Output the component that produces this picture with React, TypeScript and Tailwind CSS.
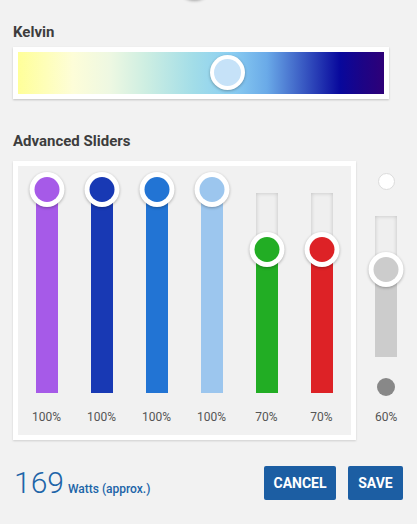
import React from "react";

const bars = [
  { c: "#a65ae8", p: 100 },
  { c: "#1839b4", p: 100 },
  { c: "#2274d4", p: 100 },
  { c: "#9cc6ee", p: 100 },
  { c: "#22ad24", p: 70 },
  { c: "#dd2226", p: 70 },
];

function Knob({ color, top }: { color: string; top: number }) {
  return (
    <div
      className="absolute left-1/2 -translate-x-1/2 w-[35px] h-[35px] rounded-full bg-white p-[5px] shadow-[0_1px_3px_rgba(0,0,0,0.3)]"
      style={{ top }}
    >
      <div className="w-full h-full rounded-full" style={{ backgroundColor: color }} />
    </div>
  );
}

export default function App() {
  return (
    <div
      className="relative w-[417px] h-[524px] overflow-hidden bg-[#f2f2f2] px-[13px] pt-[23px]"
      style={{ fontFamily: "Roboto, 'Liberation Sans', sans-serif" }}
    >
      <div className="absolute left-[177px] top-[-35px] w-[35px] h-[35px] rounded-full bg-[#f2f2f2] shadow-[0_1px_3px_rgba(0,0,0,0.3)]" />

      <div className="text-[15px] leading-[18px] font-bold text-[#3d3d3d]">Kelvin</div>
      <div className="mt-[6px] w-[376px] bg-white p-[5px] shadow-[0_1px_2px_rgba(0,0,0,0.2)]">
        <div className="relative h-[42px] bg-[linear-gradient(to_right,#ffff99_0%,#fdfdd8_15%,#eef8e2_25%,#cdeee2_35%,#a2dde8_48%,#8ccff2_58%,#6aaae8_68%,#2f49bb_80%,#08089c_88%,#1c0486_94%,#2e0078_100%)]">
          <div className="absolute left-[192px] top-[3px] w-[35px] h-[35px] rounded-full bg-white p-[4px] shadow-[0_1px_3px_rgba(0,0,0,0.3)]">
            <div className="w-full h-full rounded-full bg-[#c6e2f8]" />
          </div>
        </div>
      </div>

      <div className="mt-[33px] text-[15px] leading-[18px] font-bold text-[#3d3d3d]">Advanced Sliders</div>

      <div className="mt-[11px] flex items-start">
        <div className="w-[345px] h-[279px] border-[5px] border-white bg-[#f1f1f1] flex pl-[1px] pt-[27px] shadow-[0_1px_2px_rgba(0,0,0,0.15)]">
          {bars.map((b, i) => {
            const center = 196 - b.p * 2;
            const fillH = Math.min(200, 200 - center);
            return (
              <div key={i} className="w-[55px] flex flex-col items-center">
                <div className="relative w-[22px] h-[200px] bg-[#efefef] shadow-[inset_0_0_4px_rgba(0,0,0,0.2)]">
                  <div className="absolute left-0 right-0 bottom-0" style={{ height: fillH, backgroundColor: b.c }} />
                  <Knob color={b.c} top={center - 17.5} />
                </div>
                <div className="mt-[16px] text-[12px] leading-[16px] text-[#555]">{b.p}%</div>
              </div>
            );
          })}
        </div>

        <div className="ml-[12px] w-[36px] flex flex-col items-center pt-[12px]">
          <div className="w-[17px] h-[17px] rounded-full bg-white border border-[#dcdcdc]" />
          <div className="relative mt-[26px] w-[22px] h-[141px] bg-[#efefef] shadow-[inset_0_0_4px_rgba(0,0,0,0.2)]">
            <div className="absolute left-0 right-0 bottom-0 h-[88px] bg-[#cccccc]" />
            <Knob color="#cccccc" top={53 - 17.5} />
          </div>
          <div className="mt-[21px] w-[18px] h-[18px] rounded-full bg-[#888888]" />
          <div className="mt-[13px] text-[12px] leading-[16px] text-[#555]">60%</div>
        </div>
      </div>

      <div className="mt-[26px] flex items-center justify-between pr-[1px]">
        <div className="ml-[1px] flex items-baseline text-[#2064a8]">
          <span className="text-[30px] leading-[34px] font-light">169</span>
          <span className="ml-[4px] text-[12px] font-medium">Watts (approx.)</span>
        </div>
        <div className="flex gap-[12px]">
          <button className="h-[34px] w-[72px] rounded-[2px] bg-[#1c5ea3] text-white text-[14px] font-bold">CANCEL</button>
          <button className="h-[34px] w-[55px] rounded-[2px] bg-[#1c5ea3] text-white text-[14px] font-bold">SAVE</button>
        </div>
      </div>
    </div>
  );
}
